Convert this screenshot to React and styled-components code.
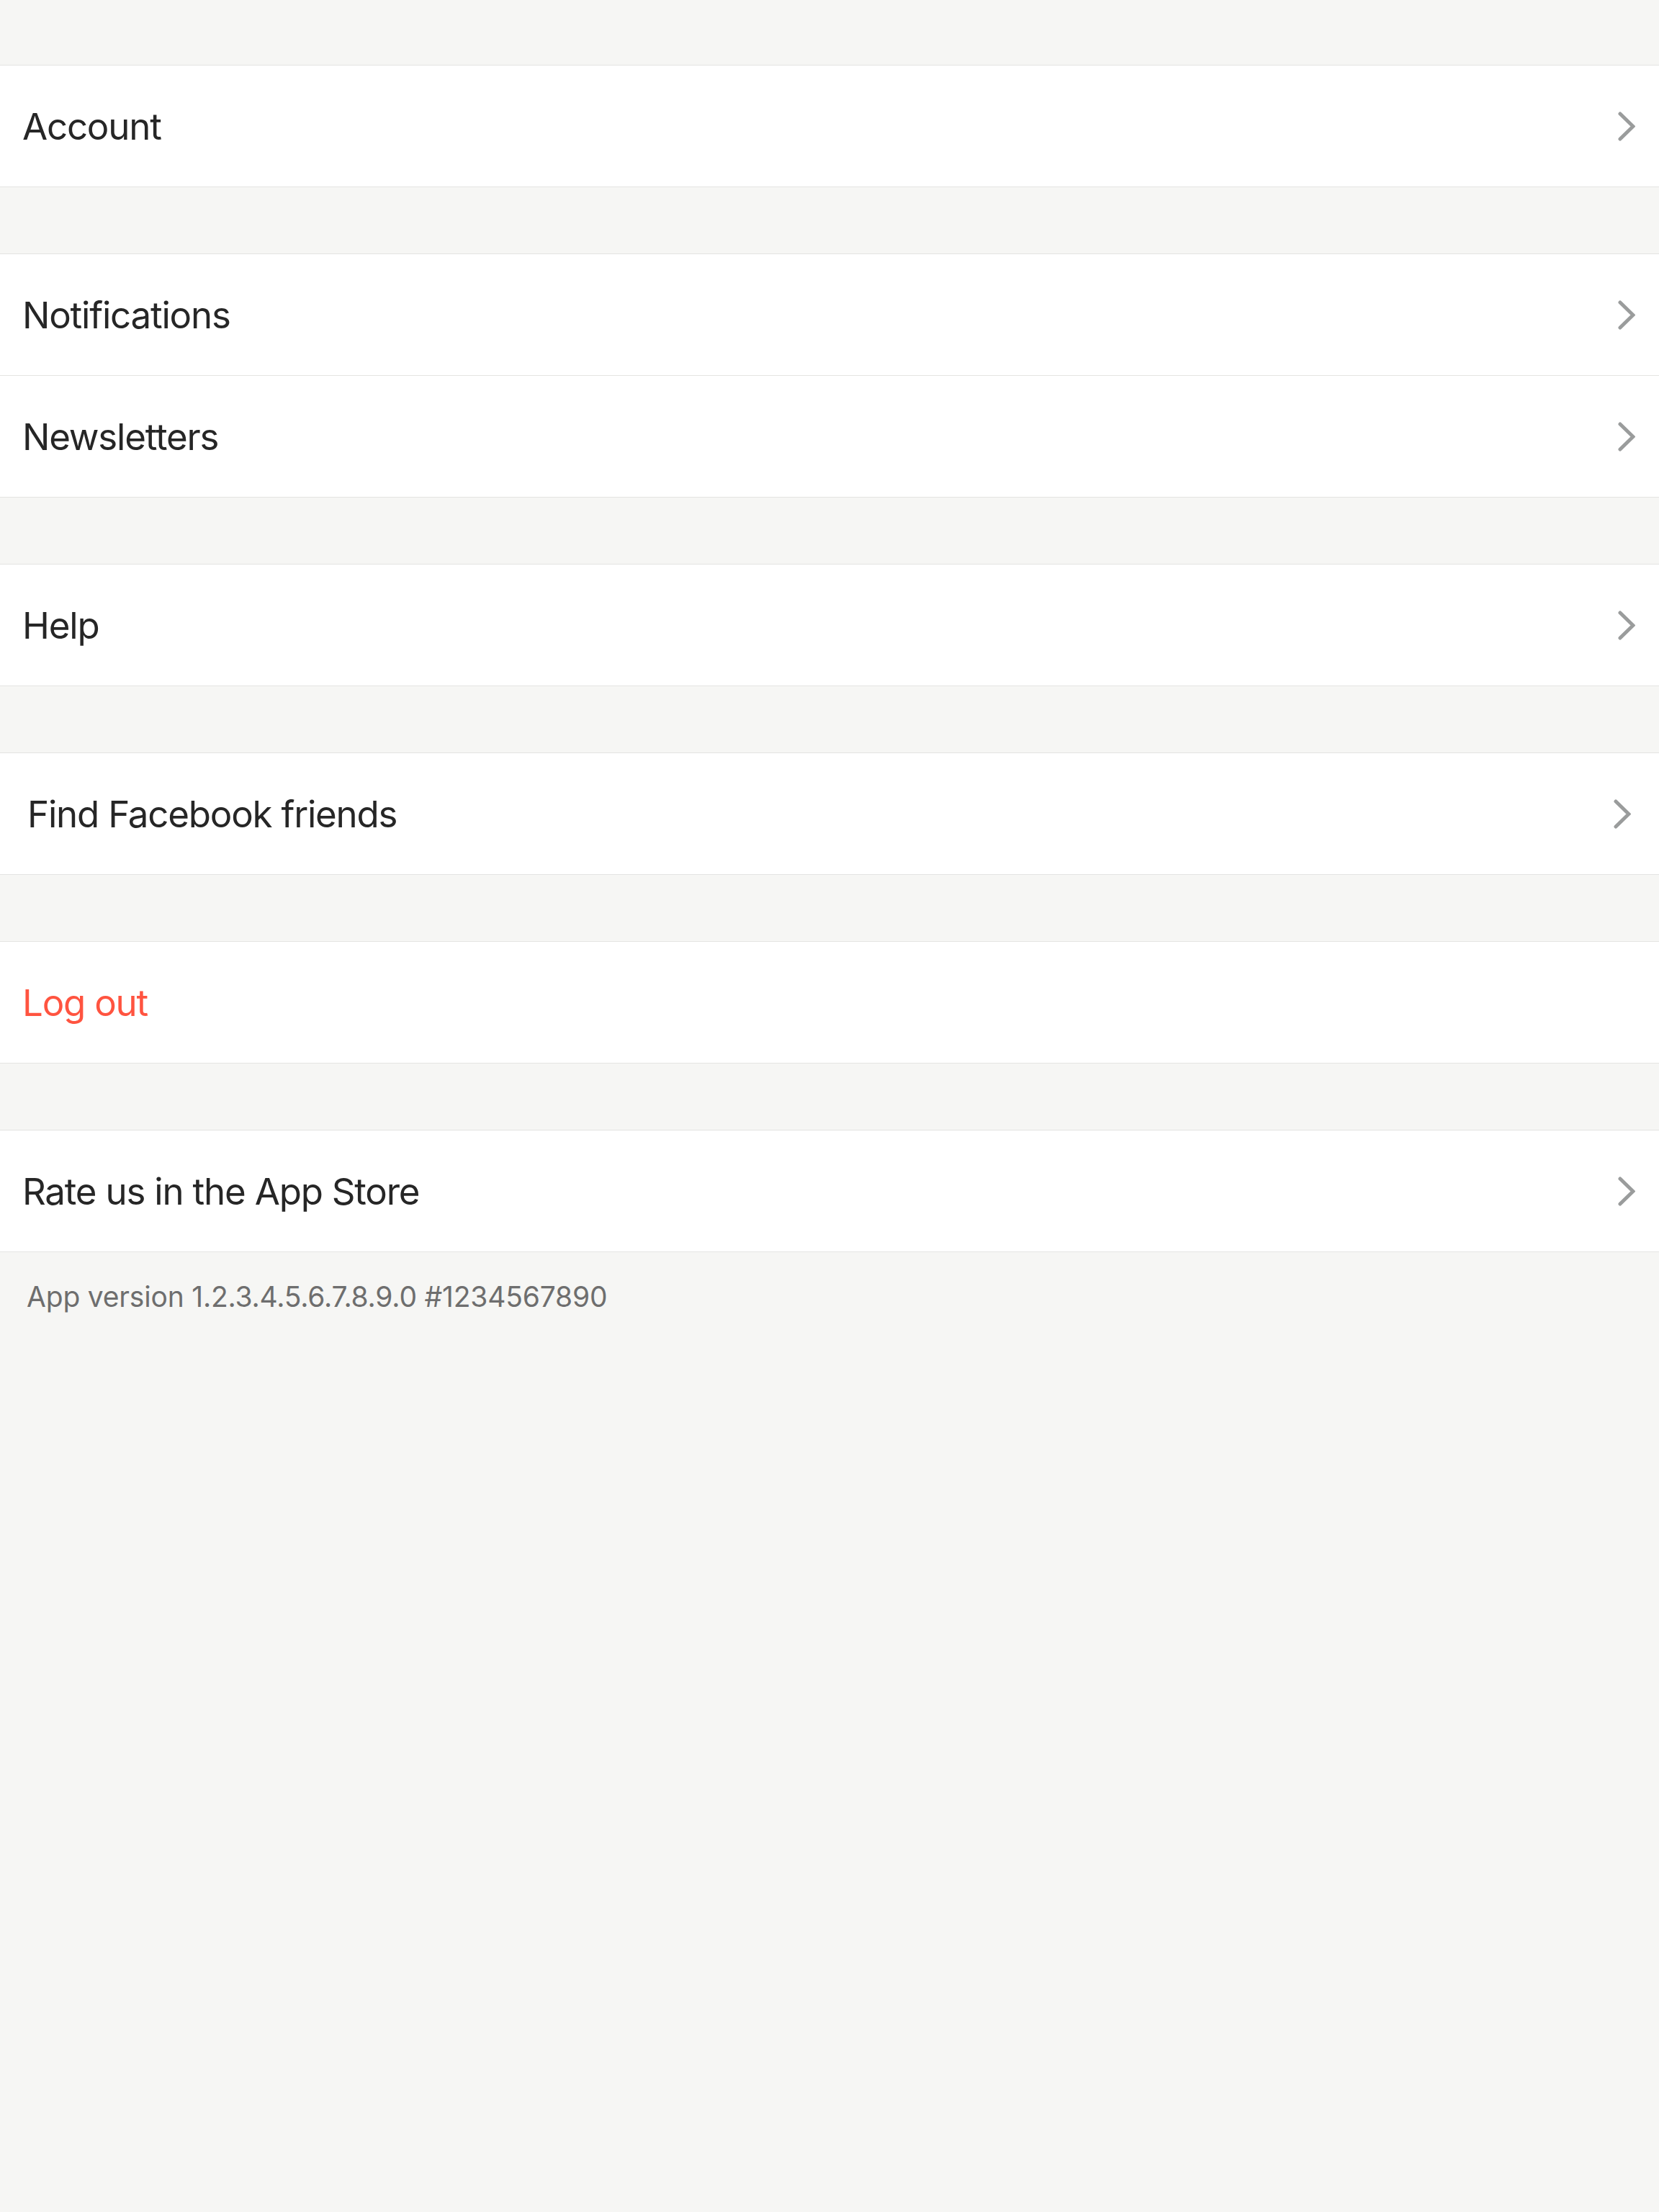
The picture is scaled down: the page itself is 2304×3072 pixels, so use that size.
import React from "react";
import styled, { createGlobalStyle } from "styled-components";

const GlobalStyle = createGlobalStyle`
    html, body {
        margin: 0;
        padding: 0;
        background: #f6f6f4;
    }
`;

const Page = styled.div`
    display: flex;
    flex-direction: column;
    width: 100%;
    min-height: 3072px;
    padding-top: 90px;
    box-sizing: border-box;
    background: #f6f6f4;
    font-family: Inter, "Liberation Sans", sans-serif;
`;

const Group = styled.div`
    display: flex;
    flex-direction: column;
    background: #fff;
    border-top: 1px solid #e4e4e2;
    margin-bottom: 92px;

    &:last-of-type {
        margin-bottom: 0;
    }
`;

const Row = styled.div`
    display: flex;
    align-items: center;
    justify-content: space-between;
    box-sizing: border-box;
    height: 169px;
    border-bottom: 1px solid #e4e4e2;
    padding: 0 ${props => props.inset ? "39px" : "33px"} 0 ${props => props.inset ? "38px" : "31px"};
`;

const Label = styled.span`
    font-size: 51px;
    letter-spacing: -1.2px;
    color: ${props => props.danger ? "#ff5440" : "#262626"};
`;

const Footer = styled.p`
    margin: 0;
    padding: 38px 0 0 37px;
    font-size: 39px;
    letter-spacing: -0.2px;
    color: #6e6e6e;
`;

function Chevron() {
    return (
        <svg width="24" height="41" viewBox="0 0 24 41">
            <polyline
                points="3,3 21,20.5 3,38"
                fill="none"
                stroke="#9a9c9c"
                strokeWidth="5"
                strokeLinecap="round"
                strokeLinejoin="miter"
            />
        </svg>
    );
}

function SettingsRow({ label, danger, inset, arrow = true }) {
    return (
        <Row inset={inset}>
            <Label danger={danger}>{label}</Label>
            {arrow && <Chevron />}
        </Row>
    );
}

export default function App() {
    return (
        <>
            <GlobalStyle />
            <Page>
                <Group>
                    <SettingsRow label="Account" />
                </Group>
                <Group>
                    <SettingsRow label="Notifications" />
                    <SettingsRow label="Newsletters" />
                </Group>
                <Group>
                    <SettingsRow label="Help" />
                </Group>
                <Group>
                    <SettingsRow label="Find Facebook friends" inset />
                </Group>
                <Group>
                    <SettingsRow label="Log out" danger arrow={false} />
                </Group>
                <Group>
                    <SettingsRow label="Rate us in the App Store" />
                </Group>
                <Footer>App version 1.2.3.4.5.6.7.8.9.0 #1234567890</Footer>
            </Page>
        </>
    );
}
